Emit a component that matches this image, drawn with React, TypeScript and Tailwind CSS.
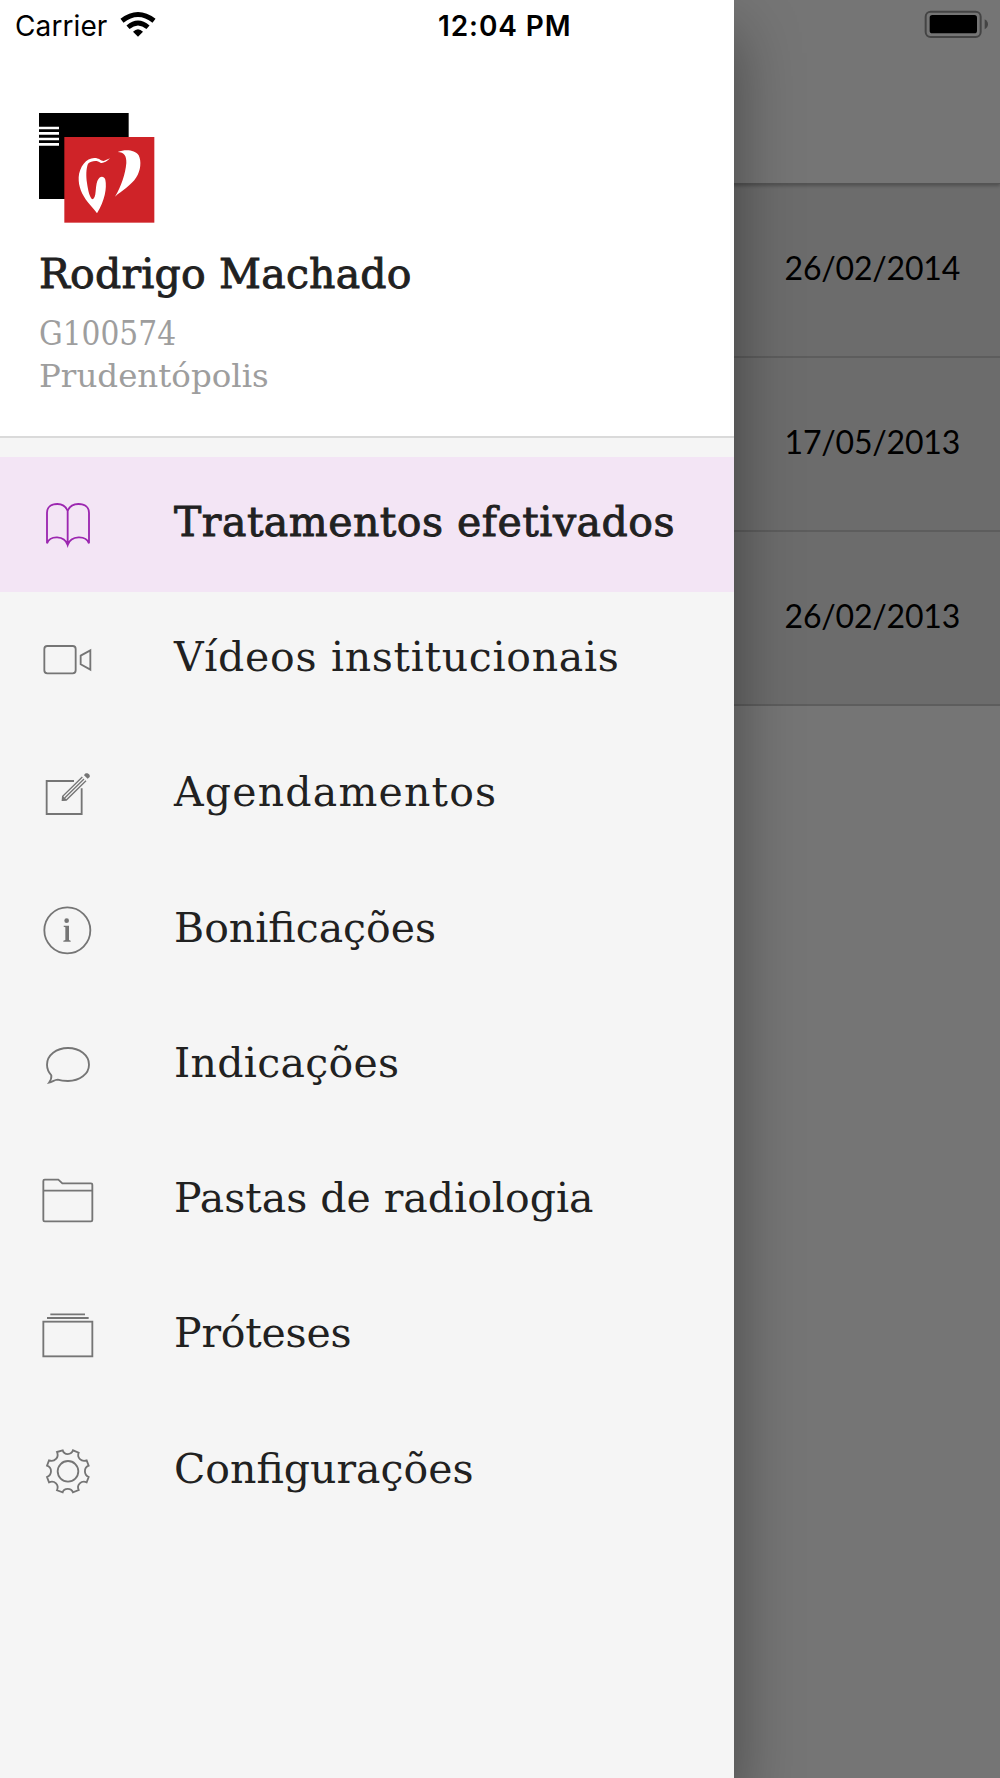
import { type ReactNode } from "react";

interface MenuEntry {
  label: string;
  icon: ReactNode;
  tracking?: string;
  active?: boolean;
}

const DATES = ["26/02/2014", "17/05/2013", "26/02/2013"];

// Every menu icon shares the same 240x180 canvas, drawn at a third of its size
function Icon({ children }: { children: ReactNode }) {
  return (
    <svg
      width="80"
      height="60"
      viewBox="0 0 240 180"
      fill="none"
      stroke="currentColor"
      strokeWidth="5.5"
      className="shrink-0"
    >
      {children}
    </svg>
  );
}

const MENU: MenuEntry[] = [
  {
    label: "Tratamentos efetivados",
    active: true,
    tracking: "tracking-[0.5px]",
    icon: (
      <Icon>
        <path d="M113 48C107 33 97 27 82 27C62 27 51 38 51 53V145C60 121 103 120 113 150C123 120 168 121 177 145V53C177 38 166 27 145 27C129 27 119 33 113 48ZM113 48V150" />
      </Icon>
    ),
  },
  {
    label: "Vídeos institucionais",
    tracking: "tracking-[0.7px]",
    icon: (
      <Icon>
        <rect x="43" y="48" width="94" height="82" rx="9" />
        <path d="M152 77L181 61V119L152 103Z" />
      </Icon>
    ),
  },
  {
    label: "Agendamentos",
    tracking: "tracking-[1.2px]",
    icon: (
      <Icon>
        <path d="M132 48H50V147H155V70" />
        <path d="M157 36L98 94L97 106L109 105L168 47M162 42L104 99" strokeWidth="4" />
        <path d="M98 92L96 107L111 105Z" fill="currentColor" stroke="none" />
        <path d="M163 29C168 20 182 27 179 36L173 41L162 31Z" fill="currentColor" stroke="none" />
      </Icon>
    ),
  },
  {
    label: "Bonificações",
    icon: (
      <Icon>
        <circle cx="112" cy="88" r="69" />
        <g fill="currentColor" stroke="none">
          <circle cx="110" cy="59" r="7" />
          <path d="M101 74H117V117L122 119V122H100V119L106 117V79L101 77Z" />
        </g>
      </Icon>
    ),
  },
  {
    label: "Indicações",
    tracking: "tracking-[0.3px]",
    icon: (
      <Icon>
        <path d="M114 36C79 36 51 58 51 86C51 99 56 109 64 118C65 125 62 133 57 140C67 138 74 131 83 131C92 134 102 135 114 135C149 135 177 114 177 86C177 58 149 36 114 36Z" />
      </Icon>
    ),
  },
  {
    label: "Pastas de radiologia",
    tracking: "tracking-normal",
    icon: (
      <Icon>
        <path d="M40 59V30Q40 26 44 26H85L97 37H183Q187 37 187 41V147Q187 151 183 151H44Q40 151 40 147ZM40 59H187" />
      </Icon>
    ),
  },
  {
    label: "Próteses",
    tracking: "tracking-[-0.2px]",
    icon: (
      <Icon>
        <path d="M61 25H165M51 36H176" />
        <rect x="40" y="47" width="147" height="104" />
      </Icon>
    ),
  },
  {
    label: "Configurações",
    icon: (
      <Icon>
        <path d="M81 30L98 25C102 40 124 40 129 25L146 32C140 47 154 61 170 55L176 71C161 77 161 98 176 105L170 121C154 114 139 129 146 144L129 151C124 137 102 137 98 151L81 145C88 129 74 114 57 121L51 105C67 98 67 77 51 71L57 55C74 61 88 46 81 30Z" />
        <circle cx="114" cy="88" r="31" />
      </Icon>
    ),
  },
];

function StatusBar() {
  return (
    <div className="absolute inset-x-0 top-0 z-20 flex h-[50px] items-center justify-between pr-3 pl-[15px] font-['Inter',sans-serif] text-[28px] text-black">
      <div className="flex items-center gap-[13px]">
        <span className="pt-[2px] tracking-[0.1px]">Carrier</span>
        <svg width="36" height="28" viewBox="0 0 108 84" className="-mt-[2px]">
          <g fill="none" stroke="black">
            <path d="M6 32Q54 -5 102 32" strokeWidth="15" />
            <path d="M24 52Q54 26 84 52" strokeWidth="14" />
          </g>
          <path d="M54 80L39 65Q54 50 69 65Z" />
        </svg>
      </div>
      <span className="absolute left-[438px] pt-[2px] font-semibold tracking-[0.9px]">12:04 PM</span>
      <svg width="64" height="28" viewBox="0 0 192 84" className="-mt-[2px]">
        <rect x="5" y="5" width="165" height="76" rx="15" fill="none" stroke="#444" strokeWidth="6" />
        <rect x="17" y="15" width="142" height="55" rx="8" />
        <path d="M182 28Q192 34 192 43T182 58Z" fill="#444" />
      </svg>
    </div>
  );
}

function Logo() {
  return (
    <svg width="118" height="112" viewBox="0 0 354 336">
      <rect x="3" y="3" width="269" height="258" />
      <path d="M3 48H63M3 64H63M3 81H63M3 97H63" stroke="white" strokeWidth="8" />
      <rect x="79" y="75" width="270" height="257" fill="#cf2328" />
      <g fill="white">
        <path d="M216 139C205 150 194 155 187 152C179 144 160 145 150 155C144 170 144 192 147 213C150 234 155 259 164 262C176 257 171 225 178 207C184 192 197 190 202 203C207 228 201 264 177 304C168 290 158 282 149 270C132 248 121 225 122 196C124 164 146 137 170 138C182 138 188 146 197 147Z" />
        <path d="M239 120C263 111 291 114 302 130C311 148 308 176 295 196C280 220 252 236 231 254C250 223 262 186 265 153C266 133 259 120 239 120Z" />
      </g>
    </svg>
  );
}

function Drawer() {
  return (
    <aside className="absolute inset-y-0 left-0 z-10 w-[734px] bg-[#f5f5f5] font-['DejaVu_Serif',serif] text-[#212121] shadow-[0_32px_60px_rgba(0,0,0,0.4)]">
      <header className="h-[438px] border-b-2 border-[#dadada] bg-white px-[38px] pt-[112px]">
        <Logo />
        <h1 className="mt-[26px] pl-px text-[41px] leading-[49px] tracking-[0.2px] [-webkit-text-stroke:0.9px_#212121]">
          Rodrigo Machado
        </h1>
        <p className="mt-[13px] pl-px font-['DejaVu_Serif_Condensed',serif] text-[33px] leading-[43px] text-[#9e9e9e]">
          G100574
        </p>
        <p className="pl-px text-[32.5px] leading-[43px] text-[#9e9e9e]">Prudentópolis</p>
      </header>
      <nav className="pt-[19px]">
        {MENU.map(({ label, icon, tracking, active }) => (
          <a
            key={label}
            className={`flex h-[135.3px] items-center gap-[64px] pl-[30px] ${active ? "bg-[#f3e5f5]" : ""}`}
          >
            <span className={active ? "text-[#9c27b0]" : "text-[#757575]"}>{icon}</span>
            <span
              className={`pb-[6px] text-[41px] leading-[48px] whitespace-nowrap ${tracking ?? ""} ${active ? "[-webkit-text-stroke:0.9px_#212121]" : ""}`}
            >
              {label}
            </span>
          </a>
        ))}
      </nav>
    </aside>
  );
}

export default function App() {
  return (
    <div className="relative h-[1778px] w-full overflow-hidden bg-white">
      <div className="relative h-[184px] border-b border-[#b8b8b8] bg-white shadow-[0_2px_3px_rgba(0,0,0,0.25)]" />
      <ul className="font-['Lato',sans-serif] text-[32px] tracking-[-0.2px] text-black">
        {DATES.map((date) => (
          <li
            key={date}
            className="flex h-[174px] items-center justify-end border-b-2 border-[#cacaca] bg-[#ebebeb] pr-[40px] pb-[4px]"
          >
            {date}
          </li>
        ))}
      </ul>
      {/* Voile sombre derrière le menu */}
      <div className="absolute inset-0 bg-black/54" />
      <Drawer />
      <StatusBar />
    </div>
  );
}
